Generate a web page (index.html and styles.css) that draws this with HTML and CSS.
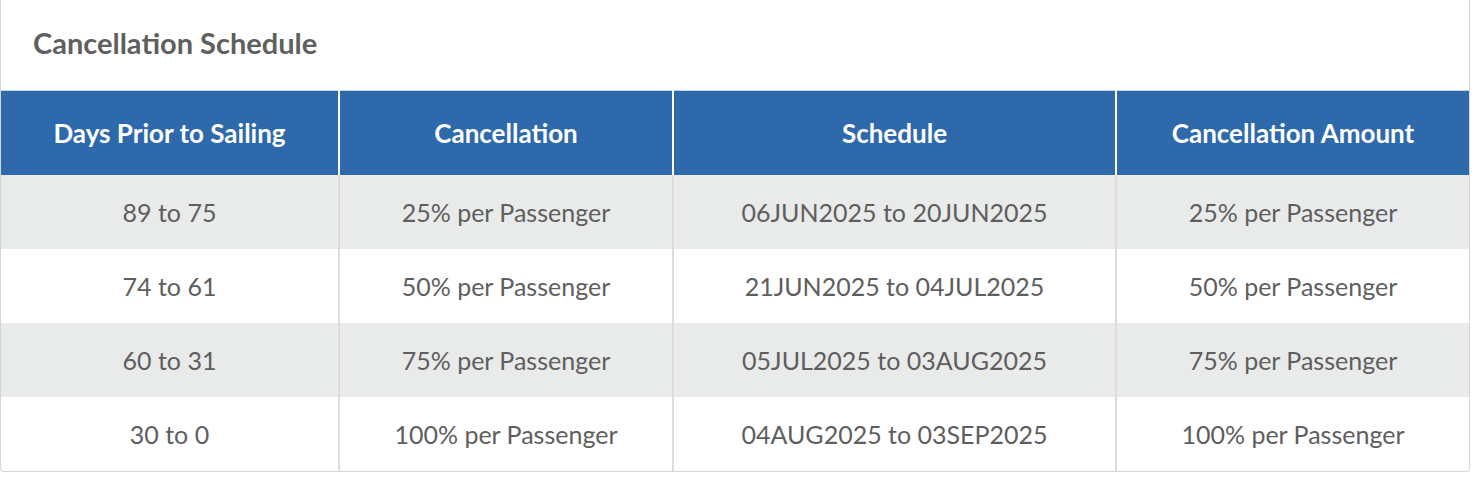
FILE: index.html
```html
<!DOCTYPE html>
<html>
<head>
<meta charset="utf-8">
<link rel="stylesheet" href="styles.css">
</head>
<body>
<div class="card">
  <h2 class="title">Cancellation Schedule</h2>
  <table class="sched">
    <colgroup>
      <col class="c1"><col class="c2"><col class="c3"><col class="c4">
    </colgroup>
    <thead>
      <tr>
        <th>Days Prior to Sailing</th>
        <th>Cancellation</th>
        <th>Schedule</th>
        <th>Cancellation Amount</th>
      </tr>
    </thead>
    <tbody>
      <tr><td>89 to 75</td><td>25% per Passenger</td><td>06JUN2025 to 20JUN2025</td><td>25% per Passenger</td></tr>
      <tr><td>74 to 61</td><td>50% per Passenger</td><td>21JUN2025 to 04JUL2025</td><td>50% per Passenger</td></tr>
      <tr><td>60 to 31</td><td>75% per Passenger</td><td>05JUL2025 to 03AUG2025</td><td>75% per Passenger</td></tr>
      <tr><td>30 to 0</td><td>100% per Passenger</td><td>04AUG2025 to 03SEP2025</td><td>100% per Passenger</td></tr>
    </tbody>
  </table>
</div>
</body>
</html>
```
FILE: styles.css
```css
html, body {
  margin: 0;
  padding: 0;
  background: #fff;
}
body {
  font-family: Lato, "Open Sans", sans-serif;
  color: #5a5a5a;
}
.card {
  width: 1470px;
  box-sizing: border-box;
  border: 1px solid #d6d6d6;
  border-top: none;
  border-radius: 0 0 4px 4px;
  overflow: hidden;
  background: #fff;
}
.title {
  margin: 0;
  height: 90px;
  box-sizing: border-box;
  padding: 25px 0 0 32px;
  font-size: 29px;
  font-weight: 700;
  color: #5f5f5f;
  line-height: 36px;
}
.sched {
  width: 100%;
  table-layout: fixed;
  border-collapse: collapse;
  border-top: 1px solid #c9d3de;
}
.c1 { width: 338px; }
.c2 { width: 334px; }
.c3 { width: 443px; }
.c4 { width: auto; }
.sched th {
  background: #2e69ab;
  color: #fff;
  font-size: 26px;
  font-weight: 700;
  height: 84px;
  padding: 0;
  border-left: 2px solid #fff;
  text-align: center;
}
.sched th:first-child { border-left: none; }
.sched td {
  height: 74px;
  padding: 0;
  font-size: 25px;
  text-align: center;
  color: #5e5e5e;
  border-left: 2px solid #dcdcdc;
}
.sched td:first-child { border-left: none; }
.sched tbody tr:nth-child(odd) td { background: #e9eaea; }
```
